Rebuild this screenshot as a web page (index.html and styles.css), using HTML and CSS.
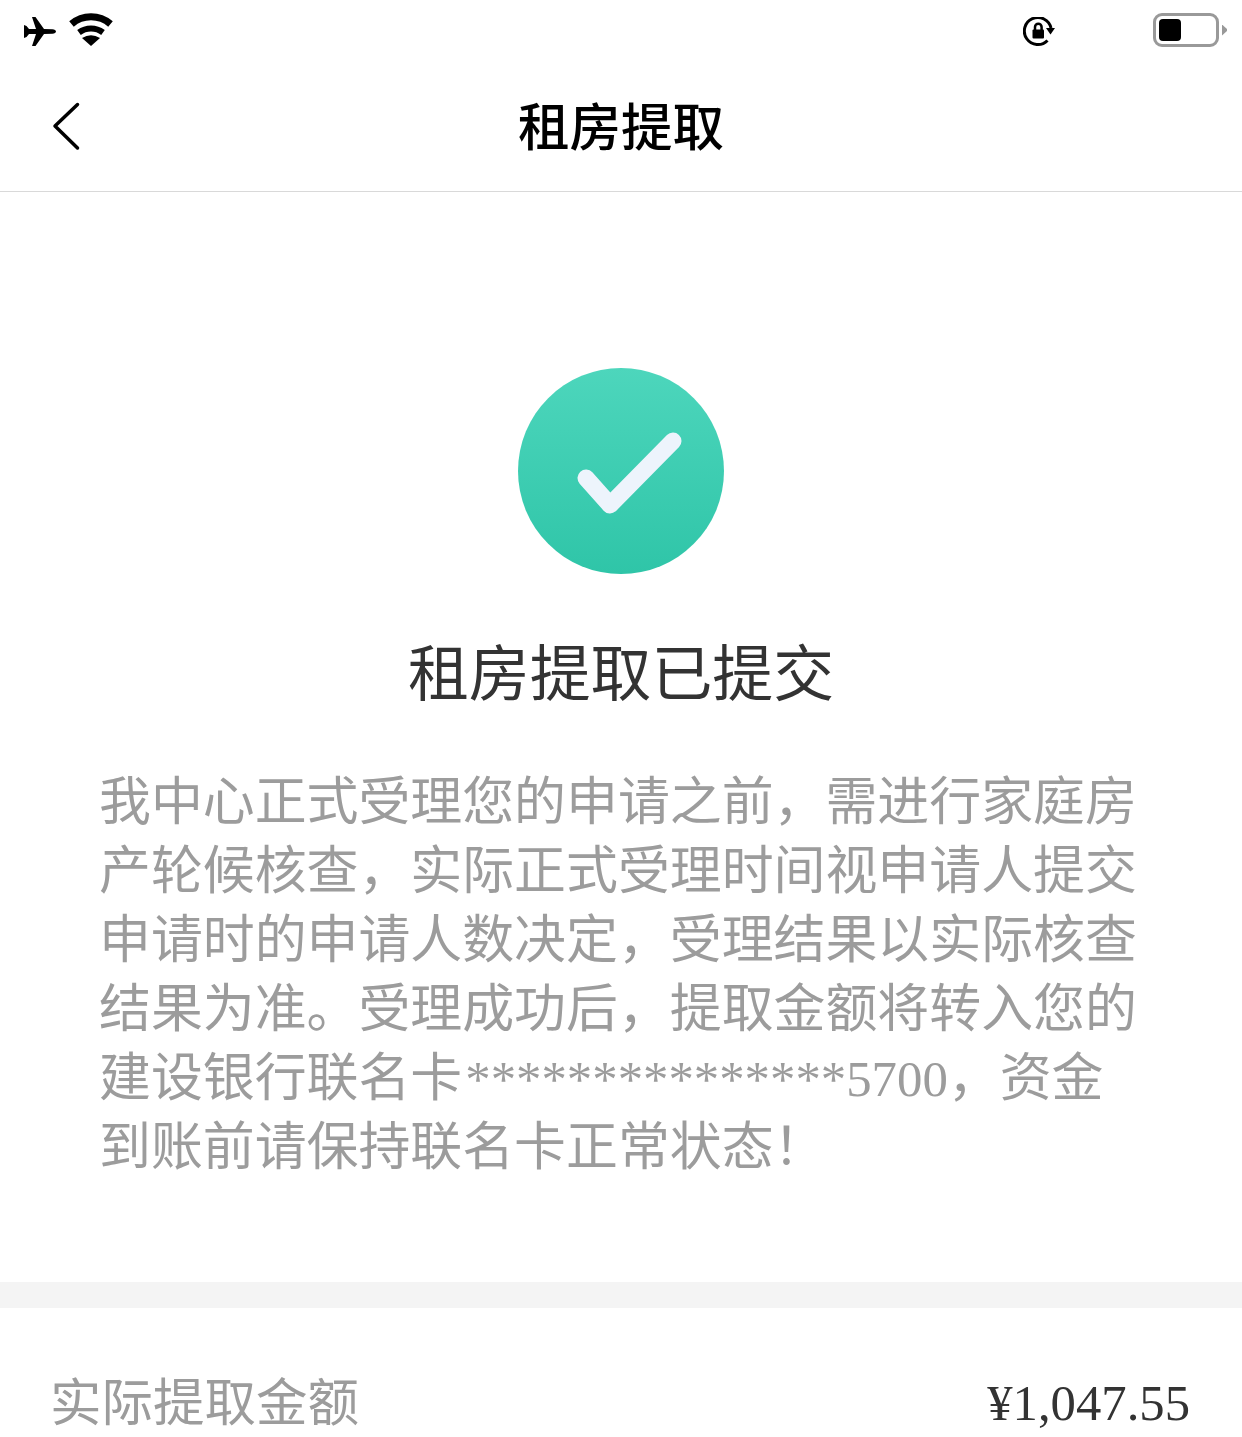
FILE: index.html
```html
<!DOCTYPE html>
<html lang="zh-CN">
<head>
<meta charset="utf-8">
<title>租房提取</title>
<link rel="stylesheet" href="styles.css">
</head>
<body>
<div class="page">
  <header class="status">
    <div class="status-left">
      <svg class="ico-plane" viewBox="0 0 32 29"><path d="M32 14.500c0-1.200-1.500-2-3.500-2.200L20 12 11.500 0H8l4 12H5L2.500 9 0 8v13l2.500-1L5 17h7L8 29h3.500L20 17l8.500-.3c2-.2 3.500-1 3.500-2.200z" fill="#000"/></svg>
      <svg class="ico-wifi" viewBox="0 0 46 34"><path d="M23 33 14 25Q23 19.500 32 25z" fill="#000"/><path d="M11 19.500A20 20 0 0 1 35 19.500" fill="none" stroke="#000" stroke-width="6"/><path d="M3.500 11A30 30 0 0 1 42.500 11" fill="none" stroke="#000" stroke-width="7"/></svg>
    </div>
    <div class="status-right">
      <svg class="ico-lock" viewBox="0 0 33 30"><path d="M24.500 23.500A13.500 13.500 0 1 1 28 11" fill="none" stroke="#000" stroke-width="3"/><path d="m23 11 9 0-4.500 6.500z" fill="#000"/><rect x="9.500" y="12.500" width="11.500" height="9" rx="1" fill="#000"/><path d="M12 13v-3a3.300 3.300 0 0 1 6.600 0v3" fill="none" stroke="#000" stroke-width="2.500"/></svg>
      <div class="battery"><div class="battery-body"><div class="battery-level"></div></div><div class="battery-tip"></div></div>
    </div>
  </header>
  <nav class="nav">
    <svg class="back" viewBox="0 0 29 50"><path d="M25.500 3.500 3 25l22.500 22" fill="none" stroke="#000" stroke-width="3.500" stroke-linecap="round" stroke-linejoin="round"/></svg>
    <h1 class="nav-title">租房提取</h1>
  </nav>
  <section class="result">
    <svg class="check" viewBox="0 0 206 206">
      <defs><linearGradient id="g" x1="0" y1="0" x2="0" y2="1"><stop offset="0" stop-color="#4dd6bc"/><stop offset="1" stop-color="#2fc5a8"/></linearGradient></defs>
      <circle cx="103" cy="103" r="103" fill="url(#g)"/>
      <path d="M68 110 92 137 155 73" fill="none" stroke="#edf4fc" stroke-width="17" stroke-linecap="round" stroke-linejoin="round"/>
    </svg>
    <h2 class="result-title">租房提取已提交</h2>
    <p class="result-text">我中心正式受理您的申请之前，需进行家庭房产轮候核查，实际正式受理时间视申请人提交申请时的申请人数决定，受理结果以实际核查结果为准。受理成功后，提取金额将转入您的建设银行联名卡<span class="latin">***************5700</span>，资金到账前请保持联名卡正常状态！</p>
  </section>
  <div class="divider"></div>
  <section class="row">
    <span class="row-label">实际提取金额</span>
    <span class="row-value">¥1,047.55</span>
  </section>
</div>
</body>
</html>
```
FILE: styles.css
```css
* { box-sizing: border-box; }
html, body { margin: 0; padding: 0; background: #fff; }
body { width: 1242px; height: 1437px; overflow: hidden; font-family: "Noto Sans CJK SC", "Liberation Sans", sans-serif; }
.page { display: flex; flex-direction: column; height: 1437px; overflow: hidden; }
.status { height: 62px; flex: none; display: flex; justify-content: space-between; align-items: flex-start; padding: 13px 15px 0 24px; }
.status-left { display: flex; align-items: flex-start; gap: 12px; }
.ico-plane { width: 32px; height: 29px; margin-top: 4px; }
.ico-wifi { width: 46px; height: 34px; }
.status-right { display: flex; align-items: flex-start; gap: 97px; }
.ico-lock { width: 33px; height: 30px; margin-top: 4px; }
.battery { display: flex; align-items: center; gap: 3px; }
.battery-body { width: 66px; height: 34px; border: 3px solid #999; border-radius: 9px; padding: 3px; }
.battery-level { width: 22px; height: 22px; background: #000; border-radius: 4px; }
.battery-tip { width: 5px; height: 11px; background: #999; clip-path: polygon(0 0, 100% 40%, 100% 60%, 0 100%); }
.nav { height: 130px; flex: none; border-bottom: 1px solid #d9d9d9; display: flex; align-items: center; justify-content: center; position: relative; }
.back { position: absolute; left: 52px; top: 39px; width: 29px; height: 50px; }
.nav-title { margin: 0 0 6px; font-size: 51.500px; font-weight: 500; color: #000; line-height: 1.2; }
.result { flex: none; height: 1090px; display: flex; flex-direction: column; align-items: center; padding-top: 176px; }
.check { width: 206px; height: 206px; display: block; }
.result-title { margin: 56px 0 0; font-size: 60.900px; font-weight: 400; color: #333; line-height: 80px; }
.result-text { width: 1044px; align-self: flex-start; margin: 53px 0 0 99px; font-size: 51.900px; line-height: 69px; color: #9c9c9c; text-align: left; font-family: "Noto Sans CJK SC", sans-serif; }
.latin { font-family: "Liberation Serif", serif; font-size: 50.800px; line-height: 0; margin-left: 3px; }
.divider { height: 26px; background: #f4f4f4; flex: none; }
.row { display: flex; justify-content: space-between; align-items: center; padding: 52px 52px 0 50px; }
.row-label { font-size: 51.500px; color: #9c9c9c; line-height: 70px; }
.row-value { font-size: 50.700px; color: #333; line-height: 70px; margin-top: 8px; font-family: "Liberation Serif", serif; }
```
